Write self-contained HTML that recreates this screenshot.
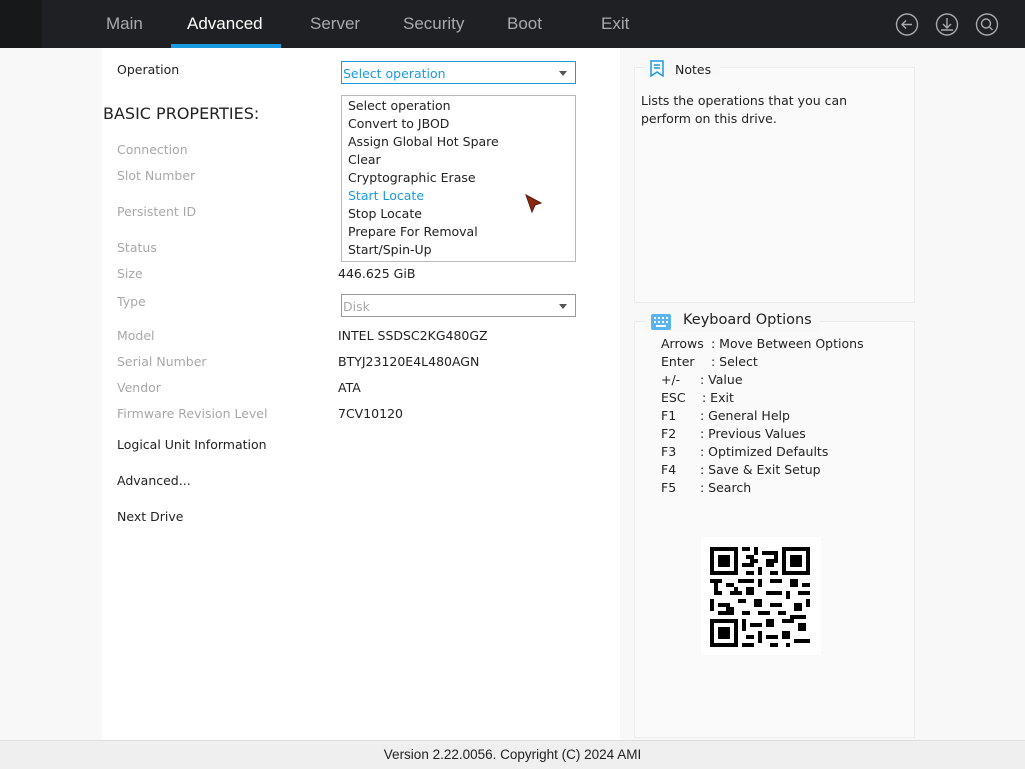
<!DOCTYPE html>
<html><head><meta charset="utf-8"><style>
*{margin:0;padding:0;box-sizing:border-box}
body{width:1025px;height:769px;overflow:hidden;background:#f8f8f8;font-family:"DejaVu Sans","Liberation Sans",sans-serif;font-size:12.5px;color:#222;position:relative}
.hdr{position:absolute;left:0;top:0;width:1025px;height:48px;background:#1f2023}
.hdr .l{position:absolute;left:0;top:0;width:42px;height:48px;background:#17181a}
.tab{position:absolute;top:14px;font-family:"Liberation Sans",sans-serif;font-size:17px;color:#a9aaac}
.ul{position:absolute;left:171px;top:44px;width:110px;height:4px;background:#1a9ae0}
.abs{position:absolute;white-space:nowrap}
.main{position:absolute;left:102px;top:48px;width:518px;height:692px;background:#fff}
.g{color:#a8a8a8}
.sel{position:absolute;border:1px solid #999;background:#fff;height:23px}
.sel .arr{position:absolute;right:8px;top:9px;width:0;height:0;border-left:4px solid transparent;border-right:4px solid transparent;border-top:5px solid #555}
.panel{position:absolute;border:1px solid #ececec;background:#fafafa}
.foot{position:absolute;left:0;top:740px;width:1025px;height:29px;background:#efefef;border-top:1px solid #ddd;text-align:center;font-family:"Liberation Sans",sans-serif;font-size:13.5px;line-height:27px;color:#222}
.k{position:absolute;left:661px;white-space:nowrap}
</style></head><body>
<div class="hdr"><div class="l"></div>
<div class="tab" style="left:106px">Main</div>
<div class="tab" style="left:187px;color:#fff">Advanced</div>
<div class="tab" style="left:310px">Server</div>
<div class="tab" style="left:403px">Security</div>
<div class="tab" style="left:507px">Boot</div>
<div class="tab" style="left:601px">Exit</div>
<div class="ul"></div>
<svg class="abs" style="left:895px;top:12px" width="106" height="25" viewBox="0 0 106 25" fill="none" stroke="#a9aaac" stroke-width="1.4">
<circle cx="12" cy="12.5" r="10.5"/><path d="M17 12.5H7M11 8.5l-4 4 4 4"/>
<circle cx="52" cy="12.5" r="10.5"/><path d="M52 6v10M48 12l4 4 4-4M46 18h12"/>
<circle cx="92" cy="12.5" r="10.5"/><circle cx="91" cy="11.5" r="4.5"/><path d="M94.5 15l3 3"/>
</svg>
</div>
<div class="main"></div>
<div class="abs" style="left:117px;top:62px">Operation</div>
<div class="sel" style="left:341px;top:61px;width:235px;border-color:#1a9ae0"><span class="abs" style="left:1px;top:4px;color:#1a9ae0">Select operation</span><div class="arr"></div></div>
<div class="abs" style="left:103px;top:104px;font-size:16px">BASIC PROPERTIES:</div>
<div class="abs" style="left:341px;top:95px;width:235px;height:167px;border:1px solid #bbb;background:#fff"></div>
<div class="abs" style="left:348px;top:97px;line-height:18px">Select operation<br>Convert to JBOD<br>Assign Global Hot Spare<br>Clear<br>Cryptographic Erase<br><span style="color:#1a9ae0">Start Locate</span><br>Stop Locate<br>Prepare For Removal<br>Start/Spin-Up</div>
<svg class="abs" style="left:525px;top:194px" width="18" height="20"><path d="M1 1l15 8-6 2-3 7z" fill="#8b2a10" stroke="#5a1a08" stroke-width="1"/></svg>
<div class="abs g" style="left:117px;top:142px">Connection</div>
<div class="abs g" style="left:117px;top:168px">Slot Number</div>
<div class="abs g" style="left:117px;top:204px">Persistent ID</div>
<div class="abs g" style="left:117px;top:240px">Status</div>
<div class="abs g" style="left:117px;top:266px">Size</div>
<div class="abs" style="left:338px;top:266px">446.625 GiB</div>
<div class="abs g" style="left:117px;top:294px">Type</div>
<div class="sel" style="left:341px;top:294px;width:235px"><span class="abs g" style="left:1px;top:4px">Disk</span><div class="arr"></div></div>
<div class="abs g" style="left:117px;top:328px">Model</div>
<div class="abs" style="left:338px;top:328px">INTEL SSDSC2KG480GZ</div>
<div class="abs g" style="left:117px;top:354px">Serial Number</div>
<div class="abs" style="left:338px;top:354px">BTYJ23120E4L480AGN</div>
<div class="abs g" style="left:117px;top:380px">Vendor</div>
<div class="abs" style="left:338px;top:380px">ATA</div>
<div class="abs g" style="left:117px;top:406px">Firmware Revision Level</div>
<div class="abs" style="left:338px;top:406px">7CV10120</div>
<div class="abs" style="left:117px;top:437px">Logical Unit Information</div>
<div class="abs" style="left:117px;top:473px">Advanced...</div>
<div class="abs" style="left:117px;top:509px">Next Drive</div>

<div class="panel" style="left:634px;top:67px;width:281px;height:236px"></div>
<div class="abs" style="left:645px;top:58px;width:75px;height:20px;background:#f8f8f8"></div>
<svg class="abs" style="left:650px;top:60px" width="14" height="17" fill="none" stroke="#1a9ae0" stroke-width="1.5"><path d="M1 1h12v15l-6-4-6 4z"/><path d="M4 5h6M4 8h6"/></svg>
<div class="abs" style="left:675px;top:62px">Notes</div>
<div class="abs" style="left:641px;top:92px;line-height:18px">Lists the operations that you can<br>perform on this drive.</div>

<div class="panel" style="left:634px;top:321px;width:281px;height:417px"></div>
<div class="abs" style="left:645px;top:310px;width:175px;height:22px;background:#f8f8f8"></div>
<svg class="abs" style="left:650px;top:313px" width="22" height="18"><rect x="1" y="1" width="20" height="16" rx="2" fill="#5ab4ee"/><g fill="#fff"><rect x="4" y="4" width="2" height="2"/><rect x="8" y="4" width="2" height="2"/><rect x="12" y="4" width="2" height="2"/><rect x="16" y="4" width="2" height="2"/><rect x="4" y="8" width="2" height="2"/><rect x="8" y="8" width="2" height="2"/><rect x="12" y="8" width="2" height="2"/><rect x="16" y="8" width="2" height="2"/><rect x="6" y="12" width="10" height="2"/></g></svg>
<div class="abs" style="left:683px;top:312px;font-size:14.5px">Keyboard Options</div>
<div class="k" style="top:336px">Arrows</div><div class="abs" style="left:711px;top:336px">: Move Between Options</div>
<div class="k" style="top:354px">Enter</div><div class="abs" style="left:711px;top:354px">: Select</div>
<div class="k" style="top:372px">+/-</div><div class="abs" style="left:700px;top:372px">: Value</div>
<div class="k" style="top:390px">ESC</div><div class="abs" style="left:702px;top:390px">: Exit</div>
<div class="k" style="top:408px">F1</div><div class="abs" style="left:700px;top:408px">: General Help</div>
<div class="k" style="top:426px">F2</div><div class="abs" style="left:700px;top:426px">: Previous Values</div>
<div class="k" style="top:444px">F3</div><div class="abs" style="left:700px;top:444px">: Optimized Defaults</div>
<div class="k" style="top:462px">F4</div><div class="abs" style="left:700px;top:462px">: Save &amp; Exit Setup</div>
<div class="k" style="top:480px">F5</div><div class="abs" style="left:700px;top:480px">: Search</div>
<svg class="abs" style="left:701px;top:537px" width="120" height="118" viewBox="0 0 120 118">
<rect width="120" height="118" fill="#fff"/>
<g transform="translate(9,10)" fill="#000">
<path d="M0 0h28v28H0zM4 4v20h20V4zM8 8h12v12H8z" fill-rule="evenodd"/>
<path d="M72 0h28v28H72zM76 4v20h20V4zM80 8h12v12H80z" fill-rule="evenodd"/>
<path d="M0 72h28v28H0zM4 76v20h20V76zM8 80h12v12H8z" fill-rule="evenodd"/>
<rect x="32" y="0" width="8" height="4"/><rect x="44" y="0" width="4" height="8"/><rect x="52" y="4" width="12" height="4"/><rect x="36" y="8" width="8" height="4"/><rect x="56" y="12" width="8" height="8"/><rect x="32" y="16" width="12" height="4"/><rect x="48" y="20" width="4" height="8"/><rect x="36" y="24" width="8" height="4"/><rect x="60" y="24" width="8" height="4"/><rect x="64" y="4" width="4" height="12"/><rect x="40" y="12" width="8" height="4"/>
<rect x="0" y="32" width="12" height="4"/><rect x="16" y="36" width="8" height="4"/><rect x="28" y="32" width="16" height="4"/><rect x="48" y="32" width="4" height="8"/><rect x="60" y="32" width="12" height="4"/><rect x="80" y="32" width="8" height="8"/><rect x="92" y="36" width="8" height="4"/><rect x="4" y="36" width="4" height="8"/>
<rect x="4" y="44" width="8" height="4"/><rect x="20" y="44" width="12" height="4"/><rect x="36" y="40" width="8" height="8"/><rect x="56" y="44" width="16" height="4"/><rect x="76" y="44" width="4" height="8"/><rect x="88" y="44" width="12" height="4"/><rect x="24" y="40" width="4" height="8"/>
<rect x="0" y="52" width="4" height="12"/><rect x="8" y="56" width="12" height="4"/><rect x="28" y="52" width="8" height="4"/><rect x="44" y="52" width="8" height="8"/><rect x="60" y="56" width="12" height="4"/><rect x="84" y="56" width="8" height="8"/><rect x="96" y="52" width="4" height="8"/><rect x="16" y="60" width="8" height="4"/>
<rect x="8" y="64" width="16" height="4"/><rect x="32" y="64" width="8" height="4"/><rect x="48" y="64" width="12" height="4"/><rect x="68" y="64" width="8" height="4"/><rect x="80" y="68" width="16" height="4"/>
<rect x="32" y="72" width="4" height="12"/><rect x="40" y="76" width="12" height="4"/><rect x="56" y="72" width="8" height="8"/><rect x="72" y="72" width="12" height="4"/><rect x="88" y="76" width="8" height="8"/>
<rect x="36" y="88" width="8" height="4"/><rect x="48" y="84" width="4" height="12"/><rect x="56" y="88" width="12" height="4"/><rect x="72" y="84" width="8" height="8"/><rect x="84" y="92" width="16" height="4"/><rect x="32" y="96" width="12" height="4"/><rect x="60" y="96" width="8" height="4"/><rect x="76" y="96" width="4" height="4"/>
</g></svg>
<div class="foot">Version 2.22.0056. Copyright (C) 2024 AMI</div>
</body></html>
